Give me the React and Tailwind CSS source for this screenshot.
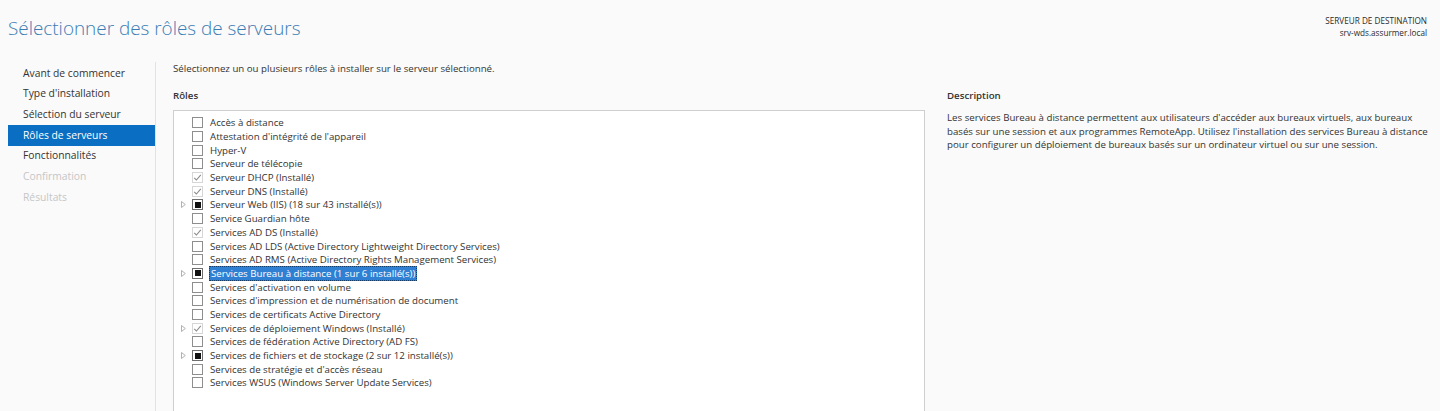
import React from 'react'

const navItems = [
  { label: 'Avant de commencer', state: 'normal' },
  { label: "Type d'installation", state: 'normal' },
  { label: 'Sélection du serveur', state: 'normal' },
  { label: 'Rôles de serveurs', state: 'active' },
  { label: 'Fonctionnalités', state: 'normal' },
  { label: 'Confirmation', state: 'disabled' },
  { label: 'Résultats', state: 'disabled' },
]

// check: 'none' | 'installed' | 'partial'
const roles = [
  { label: 'Accès à distance', check: 'none' },
  { label: "Attestation d'intégrité de l'appareil", check: 'none' },
  { label: 'Hyper-V', check: 'none' },
  { label: 'Serveur de télécopie', check: 'none' },
  { label: 'Serveur DHCP (Installé)', check: 'installed' },
  { label: 'Serveur DNS (Installé)', check: 'installed' },
  { label: 'Serveur Web (IIS) (18 sur 43 installé(s))', check: 'partial', expand: true },
  { label: 'Service Guardian hôte', check: 'none' },
  { label: 'Services AD DS (Installé)', check: 'installed' },
  { label: 'Services AD LDS (Active Directory Lightweight Directory Services)', check: 'none' },
  { label: 'Services AD RMS (Active Directory Rights Management Services)', check: 'none' },
  { label: 'Services Bureau à distance (1 sur 6 installé(s))', check: 'partial', expand: true, selected: true },
  { label: "Services d'activation en volume", check: 'none' },
  { label: "Services d'impression et de numérisation de document", check: 'none' },
  { label: 'Services de certificats Active Directory', check: 'none' },
  { label: 'Services de déploiement Windows (Installé)', check: 'installed', expand: true },
  { label: 'Services de fédération Active Directory (AD FS)', check: 'none' },
  { label: 'Services de fichiers et de stockage (2 sur 12 installé(s))', check: 'partial', expand: true },
  { label: "Services de stratégie et d'accès réseau", check: 'none' },
  { label: 'Services WSUS (Windows Server Update Services)', check: 'none' },
]

function Box({ check }) {
  if (check === 'installed') {
    return (
      <span className="w-[11px] h-[11px] border border-[#d6d6d6] bg-white flex items-center justify-center">
        <svg width="9" height="9" viewBox="0 0 9 9" fill="none">
          <path d="M1.2 4.8 L3.4 7 L7.8 1.8" stroke="#8c8c8c" strokeWidth="1.1" />
        </svg>
      </span>
    )
  }
  if (check === 'partial') {
    return (
      <span className="w-[11px] h-[11px] border border-[#6e6e6e] bg-white flex items-center justify-center">
        <span className="w-[6px] h-[6px] bg-[#111]" />
      </span>
    )
  }
  return <span className="w-[11px] h-[11px] border border-[#8e8e8e] bg-white" />
}

export default function App() {
  return (
    <div className="w-[1440px] h-[411px] overflow-hidden bg-[#fafafa] text-[#333] font-['Open_Sans',sans-serif]">
      <div className="h-[62px] flex justify-between pl-2 pr-[13px]">
        <h1 className="pt-[16px] text-[18.9px] leading-[24px] font-light text-[#3a7db5]">Sélectionner des rôles de serveurs</h1>
        <div className="pt-[15px] text-right text-[8.2px] leading-[12px] text-[#2b2b2b]">
          <div>SERVEUR DE DESTINATION</div>
          <div>srv-wds.assurmer.local</div>
        </div>
      </div>

      <div className="flex h-[349px]">
        <nav className="w-[156px] shrink-0 border-r border-[#e2e2e2] pt-[1px] text-[10.3px]">
          {navItems.map((n) => (
            <div
              key={n.label}
              className={
                n.state === 'active'
                  ? 'ml-2 h-[20.7px] pl-[15px] flex items-center bg-[#0a6fc2] text-white'
                  : n.state === 'disabled'
                  ? 'ml-2 h-[20.7px] pl-[15px] flex items-center text-[#c6c6c6]'
                  : 'ml-2 h-[20.7px] pl-[15px] flex items-center text-[#333]'
              }
            >
              {n.label}
            </div>
          ))}
        </nav>

        <main className="pl-[17px] text-[9.7px]">
          <p className="leading-[14px]">Sélectionnez un ou plusieurs rôles à installer sur le serveur sélectionné.</p>
          <div className="flex mt-[13px]">
            <section className="w-[752px] shrink-0">
              <h2 className="font-semibold leading-[14px]">Rôles</h2>
              <div className="mt-[7px] h-[320px] bg-white border border-[#cfcfcf] pt-[5px]">
                {roles.map((r) => (
                  <div key={r.label} className="h-[13.7px] flex items-center">
                    <span className="w-[18px] pl-[7px] flex items-center">
                      {r.expand && (
                        <svg width="5" height="7" viewBox="0 0 5 7" fill="none">
                          <path d="M0.5 0.5 L4.3 3.5 L0.5 6.5 Z" stroke="#a8a8a8" strokeWidth="0.9" />
                        </svg>
                      )}
                    </span>
                    <Box check={r.check} />
                    <span
                      className={
                        r.selected
                          ? 'ml-[6px] px-[1px] leading-[13px] bg-[#2f7fd2] text-white border border-dotted border-[#123d6b] whitespace-nowrap'
                          : 'ml-[7px] leading-[13px] whitespace-nowrap'
                      }
                    >
                      {r.label}
                    </span>
                  </div>
                ))}
              </div>
            </section>
            <section className="ml-[22px]">
              <h2 className="font-semibold leading-[14px]">Description</h2>
              <p className="mt-[8px] leading-[13.5px] whitespace-nowrap">
                Les services Bureau à distance permettent aux utilisateurs d'accéder aux bureaux virtuels, aux bureaux
                <br />
                basés sur une session et aux programmes RemoteApp. Utilisez l'installation des services Bureau à distance
                <br />
                pour configurer un déploiement de bureaux basés sur un ordinateur virtuel ou sur une session.
              </p>
            </section>
          </div>
        </main>
      </div>
    </div>
  )
}
